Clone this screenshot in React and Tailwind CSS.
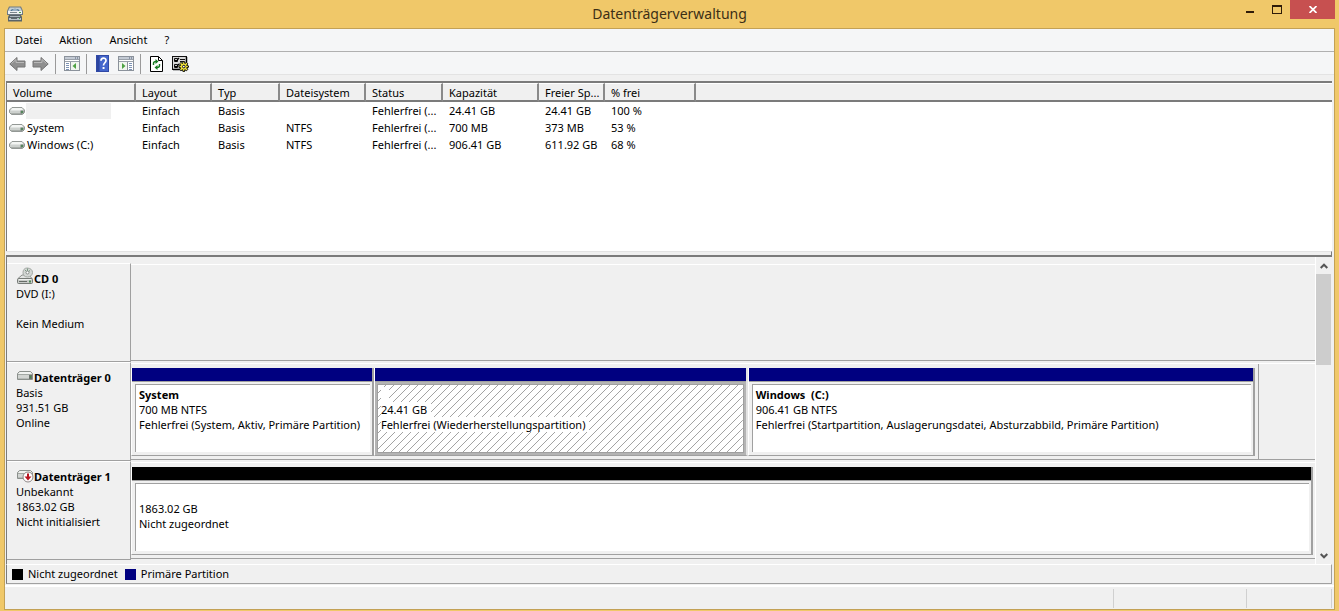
import React from 'react';

const columns = [
  { label: 'Volume', width: 129 },
  { label: 'Layout', width: 76 },
  { label: 'Typ', width: 68 },
  { label: 'Dateisystem', width: 86 },
  { label: 'Status', width: 77 },
  { label: 'Kapazität', width: 96 },
  { label: 'Freier Sp...', width: 66 },
  { label: '% frei', width: 91 },
];

const volumes = [
  { name: '', cells: ['Einfach', 'Basis', '', 'Fehlerfrei (...', '24.41 GB', '24.41 GB', '100 %'] },
  { name: 'System', cells: ['Einfach', 'Basis', 'NTFS', 'Fehlerfrei (...', '700 MB', '373 MB', '53 %'] },
  { name: 'Windows (C:)', cells: ['Einfach', 'Basis', 'NTFS', 'Fehlerfrei (...', '906.41 GB', '611.92 GB', '68 %'] },
];

const disks = [
  { title: 'CD 0', icon: 'cd', lines: ['DVD (I:)', '', 'Kein Medium'], partitions: [] },
  {
    title: 'Datenträger 0',
    icon: 'disk',
    lines: ['Basis', '931.51 GB', 'Online'],
    width: 95.3,
    partitions: [
      { title: 'System', grow: 242, lines: ['700 MB NTFS', 'Fehlerfrei (System, Aktiv, Primäre Partition)'] },
      { title: '', grow: 374, selected: true, lines: ['24.41 GB', 'Fehlerfrei (Wiederherstellungspartition)'] },
      {
        title: 'Windows  (C:)',
        grow: 509,
        lines: ['906.41 GB NTFS', 'Fehlerfrei (Startpartition, Auslagerungsdatei, Absturzabbild, Primäre Partition)'],
      },
    ],
  },
  {
    title: 'Datenträger 1',
    icon: 'error',
    lines: ['Unbekannt', '1863.02 GB', 'Nicht initialisiert'],
    width: 100,
    partitions: [{ title: '', grow: 1, unallocated: true, lines: ['1863.02 GB', 'Nicht zugeordnet'] }],
  },
];

function AppIcon() {
  return (
    <svg width="16" height="16" viewBox="0 0 16 16" aria-hidden="true">
      <path d="M2 .5h12l2 4.500v4H0V5z" fill="#6f7a81" />
      <path d="M2.800 1.500h10.400L15 5H1z" fill="#c3ced4" />
      <path d="M3.500 5c0-3 9-3 9 0z" fill="#4f7592" />
      <path d="M5 4.500c0-1.500 6-1.500 6 0z" fill="#e6eef3" />
      <rect x="1" y="5" width="14" height="3" fill="#eef1f2" />
      <rect x="3" y="6" width="7" height="1" fill="#7c878d" />
      <rect x="12" y="6" width="2" height="1" fill="#46a04b" />
      <path d="M2 9h12l1 2v4.500H1V11z" fill="#59646a" />
      <rect x="3" y="10" width="10" height="1" fill="#a9b5bb" />
      <rect x="2" y="12" width="12" height="2" fill="#b9c4c9" />
      <rect x="4" y="12" width="6" height="1" fill="#5d676d" />
      <rect x="12" y="12" width="1" height="1" fill="#46a04b" />
    </svg>
  );
}

function VolumeIcon() {
  return (
    <svg width="16" height="10" viewBox="0 0 16 10" className="shrink-0" aria-hidden="true">
      <path d="M3 1.500h10l2.500 2.500v2.500l-2 2h-11l-2-2V4z" fill="#cdd1ce" stroke="#939895" />
      <path d="M3.300 2h9.400l1.800 2.500h-13z" fill="#f3f5f3" />
      <path d="M2 7.500h11" stroke="#a9aeaa" />
      <rect x="11.500" y="4.500" width="3" height="3" fill="#6d7a6f" />
      <rect x="12.500" y="5" width="1" height="2" fill="#3f8f48" />
    </svg>
  );
}

function DiskIcon({ type }) {
  return (
    <svg width="18" height="18" viewBox="0 0 18 18" className="mb-[5px] shrink-0" aria-hidden="true">
      {type === 'cd' && (
        <g>
          <path d="M2 11.500l4-3.500h7l3 3.500z" fill="#e2e4e2" stroke="#8a8e8a" />
          <path d="M11 1c3.500 0 5.500 2 5.500 4.500S14.500 10 11.500 10 7 8 7 5.500 8.500 1 11 1z" fill="#d3d7d4" stroke="#a3a8a4" />
          <path d="M11.500 1.500v3M9 3l1.500 1.500M14 3.500l-1.500 1" stroke="#7b9a84" />
          <circle cx="11.500" cy="5.500" r="1.500" fill="#fff" stroke="#858b87" />
          <rect x="1.500" y="11.500" width="15" height="5" rx="1" fill="#c9ccc9" stroke="#767b77" />
          <path d="M3 12.500h12" stroke="#eef0ee" />
          <path d="M3 14.500h8" stroke="#666c67" />
          <rect x="13" y="13.500" width="2" height="2" fill="#4d8755" />
        </g>
      )}
      {type !== 'cd' && (
        <g>
          <path d="M3.500 5.500h11l2 2v6h-15v-6z" fill="#d2d5d2" stroke="#8b908c" />
          <path d="M4 6h10.300l1.500 2H2.200z" fill="#f1f3f1" />
          <path d="M2 8.500h14" stroke="#a3a8a4" />
          <path d="M2 12.500h11" stroke="#b7bbb8" />
          <rect x="13" y="9" width="3" height="4" fill="#6a726b" />
          <rect x="14" y="10" width="1" height="2" fill="#3f8f48" />
        </g>
      )}
      {type === 'error' && (
        <g>
          <circle cx="12" cy="12" r="5" fill="#fff" stroke="#8d8787" />
          <path d="M12 8.500v4" stroke="#b81420" strokeWidth="2" />
          <path d="M8.500 11.500h7L12 15.500z" fill="#b81420" />
        </g>
      )}
    </svg>
  );
}

function ArrowIcon({ flip }) {
  return (
    <svg width="17" height="16" viewBox="0 0 17 16" className={flip ? '-scale-x-100' : ''} aria-hidden="true">
      <path d="M.8 8L8 1.500V5h8v6H8v3.500z" fill="#8f8f8f" stroke="#747474" />
      <path d="M2.500 7.500l4.500-4V6.500h8" fill="none" stroke="#b9b9b9" />
    </svg>
  );
}

function PaneIcon({ mirrored }) {
  return (
    <svg width="16" height="15" viewBox="0 0 16 15" aria-hidden="true">
      <rect x=".5" y=".5" width="15" height="14" fill="#fff" stroke="#8b929b" />
      <rect x="1" y="1" width="14" height="2" fill="#c3cad4" />
      <path d="M11 2h1M13 2h1" stroke="#4f5f78" />
      <path d="M1 3.500h14M1 5.500h14" stroke="#9aa1aa" />
      <g transform={mirrored ? 'translate(16 0) scale(-1 1)' : undefined}>
        <path d="M6.500 6v8" stroke="#8b929b" />
        <path d="M2 7.500h3M2 9.500h3M2 11.500h3M2 13.500h3" stroke="#7d93b5" />
        <rect x="7" y="6" width="8" height="8" fill="#f1f6ef" />
        <path d="M12 7v6L8.500 10z" fill="#4fa344" />
      </g>
    </svg>
  );
}

function HelpIcon() {
  return (
    <svg width="13" height="17" viewBox="0 0 13 17" aria-hidden="true">
      <rect x=".5" y=".5" width="12" height="16" fill="#4466cc" stroke="#3049a6" />
      <path d="M1 1h2.500v15H1z" fill="#2c459f" />
      <path d="M5 5.800c0-3.600 5-3.600 5-.3 0 2.200-2.500 2.400-2.500 5" fill="none" stroke="#fff" strokeWidth="1.700" />
      <rect x="6.600" y="12" width="1.900" height="2" fill="#fff" />
    </svg>
  );
}

function RefreshIcon() {
  return (
    <svg width="13" height="16" viewBox="0 0 13 16" aria-hidden="true">
      <path d="M.5.5h8l4 4v11H.5z" fill="#fff" stroke="#000" />
      <path d="M8.500.5v4h4" fill="none" stroke="#000" />
      <path d="M3.500 9V7.500Q3.500 5.500 6 5.500M9.500 8v1.500Q9.500 11.500 7 11.500" fill="none" stroke="#177c22" strokeWidth="1.400" />
      <path d="M5.500 3v5L8.500 5.500zM7.500 9v5l-3-2.500z" fill="#177c22" />
    </svg>
  );
}

function SettingsIcon() {
  return (
    <svg width="17" height="16" viewBox="0 0 17 16" aria-hidden="true">
      <rect x=".5" y=".5" width="14" height="13" fill="#d9d9d9" stroke="#111" />
      <path d="M1 13.500h13.500V1" fill="none" stroke="#000" strokeWidth="1.500" />
      <path d="M2.500 2.500h3v3h-3zM2.500 8.500h3v3h-3z" fill="#fff" stroke="#111" />
      <path d="M3 4l1.200 1.200L7 2M3 10l1.200 1.200L7 8" fill="none" stroke="#000" strokeWidth="1.200" />
      <path d="M8 3.500h5M8 5.500h4" stroke="#111" />
      <path
        d="M11 5.500h1.500l.3 2 1.700-1 1.200 1.200-1 1.800 1.800.4v1.400l-1.800.4 1 1.800-1.200 1.200-1.700-1-.3 2H11l-.4-2-1.700 1-1.200-1.200 1-1.800-1.800-.4V9.900l1.800-.4-1-1.800 1.200-1.200 1.700 1z"
        fill="#f2e438"
        stroke="#111"
      />
      <circle cx="11.800" cy="10.600" r="1.300" fill="#fff" stroke="#111" />
    </svg>
  );
}

function ToolButton({ label, children }) {
  return (
    <button type="button" aria-label={label} className="flex h-5 items-center justify-center">
      {children}
    </button>
  );
}

function ToolDivider() {
  return <span className="h-5 w-px bg-[#9a9a9a]" />;
}

function TitleBar() {
  return (
    <header className="grid h-7 grid-cols-[1fr_auto_1fr] items-start">
      <div className="pt-[6px] pl-[7px]">
        <AppIcon />
      </div>
      <h1 className="text-sm leading-7 text-[#3c2f16]">Datenträgerverwaltung</h1>
      <div className="flex justify-end pr-1">
        <button type="button" aria-label="Minimieren" className="flex h-[18px] w-7 items-center justify-center">
          <svg width="8" height="11" viewBox="0 0 8 11" aria-hidden="true">
            <rect y="7" width="8" height="2" fill="#2f1c09" />
          </svg>
        </button>
        <button type="button" aria-label="Maximieren" className="flex h-[18px] w-[26px] items-center justify-center">
          <svg width="10" height="9" viewBox="0 0 10 9" aria-hidden="true">
            <path d="M0 0h10v9H0zM1 2v6h8V2z" fill="#2f1c09" fillRule="evenodd" />
          </svg>
        </button>
        <button
          type="button"
          aria-label="Schließen"
          className="flex h-[19px] w-[45px] items-center justify-center bg-[#c75050]"
        >
          <svg width="8" height="7" viewBox="0 0 8 7" aria-hidden="true">
            <path d="M.5 0l7 7M7.500 0l-7 7" stroke="#fff" strokeWidth="1.700" />
          </svg>
        </button>
      </div>
    </header>
  );
}

function VolumeList() {
  return (
    <div className="h-[170px] overflow-hidden border-t-2 border-l border-[#7b7b7b] bg-white">
      <table className="w-full table-fixed border-separate border-spacing-0 text-left">
        <colgroup>
          {columns.map((col) => (
            <col key={col.label} style={{ width: col.width }} />
          ))}
          <col />
        </colgroup>
        <thead>
          <tr>
            {columns.map((col) => (
              <th
                key={col.label}
                scope="col"
                className="h-[19px] border-t border-r-2 border-b-2 border-t-white border-r-[#8a8a8a] border-b-[#7b7b7b] bg-[#f0f0f0] p-0 pt-px pl-[6px] leading-[15px] font-normal whitespace-nowrap"
              >
                {col.label}
              </th>
            ))}
            <td className="border-t border-b-2 border-t-white border-b-[#7b7b7b] bg-[#f0f0f0] p-0" />
          </tr>
        </thead>
        <tbody>
          {volumes.map((vol, i) => (
            <tr key={i} className="h-[17px]">
              <td className="p-0 leading-[17px]">
                <div className="flex items-center pl-[2px]">
                  <VolumeIcon />
                  {vol.name ? <span className="pl-[2px]">{vol.name}</span> : <span className="ml-px h-4 w-[85px] bg-[#f0f0f0]" />}
                </div>
              </td>
              {vol.cells.map((cell, j) => (
                <td key={j} className="p-0 pl-[6px] leading-[17px] whitespace-nowrap">
                  {cell}
                </td>
              ))}
            </tr>
          ))}
        </tbody>
      </table>
    </div>
  );
}

function Hatch() {
  return (
    <svg className="absolute inset-0 h-full w-full" aria-hidden="true">
      <defs>
        <pattern id="hatch" width="8" height="8" patternUnits="userSpaceOnUse">
          <path d="M-1 9L9-1M-1 1L1-1M7 9L9 7" stroke="#8c8c8c" strokeWidth=".8" />
        </pattern>
      </defs>
      <rect width="100%" height="100%" fill="url(#hatch)" />
    </svg>
  );
}

function Partition({ part }) {
  return (
    <div
      className={`flex min-w-0 basis-0 flex-col border-r-2 border-b border-l border-b-[#a0a0a0] border-l-white ${part.selected ? 'border-r-[#e4e4e4]' : 'border-r-[#a0a0a0]'}`}
      style={{ flexGrow: part.grow }}
    >
      <div className={`h-[14px] border-b border-[#a0a0a0] ${part.unallocated ? 'bg-black' : 'bg-[#000080]'}`} />
      <div className={`flex flex-1 flex-col ${part.selected ? 'bg-[#b4b4b4] p-[2px]' : 'p-[2px] pb-[3px] pl-[3px]'}`}>
        <div
          className={`relative flex-1 overflow-hidden border-[#a0a0a0] bg-white pt-[2px] pl-[3px] leading-[15px] whitespace-nowrap ${part.selected ? 'border' : 'border-t border-l'}`}
        >
          {part.selected && <Hatch />}
          <p className="relative h-[15px] w-fit min-w-2 bg-white font-bold whitespace-pre">{part.title}</p>
          {part.lines.map((line) => (
            <p key={line} className="relative w-fit bg-white pr-1">
              {line}
            </p>
          ))}
        </div>
      </div>
    </div>
  );
}

function DiskRow({ disk }) {
  return (
    <section className="flex h-[99px]">
      <div className="w-[124px] shrink-0 border-t border-r border-b border-t-white border-r-[#a0a0a0] border-b-[#a0a0a0] pt-[7px] pl-[9px] leading-[15px]">
        <h2 className="flex h-[15px] items-center font-bold">
          <DiskIcon type={disk.icon} />
          {disk.title}
        </h2>
        {disk.lines.map((line, i) => (
          <p key={i} className="h-[15px]">
            {line}
          </p>
        ))}
      </div>
      <div className="mb-px flex min-w-0 flex-1 flex-col border-b border-b-[#a0a0a0]">
        <div className="mt-px h-px bg-white" />
        {disk.partitions.length > 0 && (
          <div className="flex flex-1" style={{ width: `${disk.width}%` }}>
            <div className={`mt-1 mb-[3px] flex min-w-0 flex-1 ${disk.width < 100 ? 'mr-[3px]' : 'mr-[2px]'}`}>
              {disk.partitions.map((part, i) => (
                <Partition key={i} part={part} />
              ))}
            </div>
            {disk.width < 100 && <div className="w-px bg-[#a0a0a0]" />}
          </div>
        )}
      </div>
    </section>
  );
}

function ScrollBar() {
  return (
    <div className="flex w-[17px] flex-col border-l border-white bg-[#f0f0f0]">
      <button type="button" aria-label="Nach oben" className="flex h-[17px] items-center justify-center">
        <svg width="8" height="6" viewBox="0 0 8 6" aria-hidden="true">
          <path d="M.7 5L4 1.700 7.300 5" fill="none" stroke="#555" strokeWidth="2" />
        </svg>
      </button>
      <div className="mr-px h-[91px] bg-[#cdcdcd]" />
      <button type="button" aria-label="Nach unten" className="mt-auto flex h-[17px] items-center justify-center">
        <svg width="8" height="6" viewBox="0 0 8 6" aria-hidden="true">
          <path d="M.7 1L4 4.300 7.300 1" fill="none" stroke="#555" strokeWidth="2" />
        </svg>
      </button>
    </div>
  );
}

export default function App() {
  return (
    <div className="flex min-h-screen flex-col bg-[#f0c869] font-['Noto_Sans','Segoe_UI',sans-serif] text-[11px] text-black">
      <TitleBar />
      <main className="mr-1 mb-px ml-1 flex flex-1 flex-col border border-[#c3a155] bg-[#f0f0f0]">
        <nav className="flex h-[23px] items-center gap-[17px] border-b border-[#b0b0b0] bg-[#f5f6f7] pl-[10px]">
          <button type="button">Datei</button>
          <button type="button">Aktion</button>
          <button type="button">Ansicht</button>
          <button type="button">?</button>
        </nav>
        <div className="flex h-[23px] items-center border-b border-[#e3e3e3] bg-[#f5f6f7] pt-px pl-1">
          <div className="flex items-center gap-[6px] pr-[6px]">
            <ToolButton label="Zurück">
              <ArrowIcon />
            </ToolButton>
            <ToolButton label="Vorwärts">
              <ArrowIcon flip />
            </ToolButton>
          </div>
          <ToolDivider />
          <div className="pr-[6px] pl-2">
            <ToolButton label="Konsolenstruktur">
              <PaneIcon />
            </ToolButton>
          </div>
          <ToolDivider />
          <div className="flex items-center gap-[9px] pr-[6px] pl-[9px]">
            <ToolButton label="Hilfe">
              <HelpIcon />
            </ToolButton>
            <ToolButton label="Aktionsbereich">
              <PaneIcon mirrored />
            </ToolButton>
          </div>
          <ToolDivider />
          <div className="flex items-center gap-[9px] pl-[9px]">
            <ToolButton label="Aktualisieren">
              <RefreshIcon />
            </ToolButton>
            <ToolButton label="Einstellungen">
              <SettingsIcon />
            </ToolButton>
          </div>
        </div>

        <div className="mx-px mt-[6px] flex flex-col pr-px">
          <VolumeList />
          <div className="h-[6px] border-t border-r border-b-2 border-t-[#e3e3e3] border-r-[#7b7b7b] border-b-[#7b7b7b]" />
          <div className="flex border-l border-[#7b7b7b]">
            <div className="min-w-0 flex-1 pt-[6px] pb-1">
              {disks.map((disk) => (
                <DiskRow key={disk.title} disk={disk} />
              ))}
            </div>
            <ScrollBar />
          </div>
          <footer className="flex h-5 items-center border-t border-r border-b border-l border-t-white border-r-[#a0a0a0] border-b-[#a0a0a0] border-l-[#7b7b7b] pl-[5px]">
            <span className="h-[11px] w-[11px] bg-black" />
            <span className="pr-[7px] pl-[5px]">Nicht zugeordnet</span>
            <span className="h-[11px] w-[11px] bg-[#000080]" />
            <span className="pl-[5px]">Primäre Partition</span>
          </footer>
        </div>

        <div className="mt-px flex flex-1 border-t-2 border-white pt-[2px] pb-px">
          <div className="flex-1 border-r border-[#d0d0d0]" />
          <div className="w-[133px] border-r border-[#d0d0d0]" />
          <div className="mr-[2px] w-[85px] border-r border-[#d0d0d0]" />
        </div>
      </main>
    </div>
  );
}
